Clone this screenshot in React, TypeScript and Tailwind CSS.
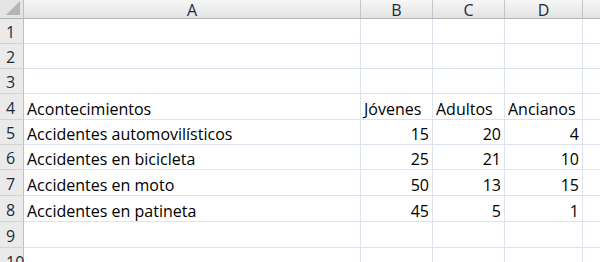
const COLS = ['A', 'B', 'C', 'D', ''];

const ROW_HEIGHTS = [25, 25, 25, 26, 25, 25, 26, 26, 26, 26];

type Cell = { text: string; align?: 'left' | 'right' };

const DATA: Record<number, Cell[]> = {
  4: [
    { text: 'Acontecimientos' },
    { text: 'Jóvenes' },
    { text: 'Adultos' },
    { text: 'Ancianos' },
  ],
  5: [
    { text: 'Accidentes automovilísticos' },
    { text: '15', align: 'right' },
    { text: '20', align: 'right' },
    { text: '4', align: 'right' },
  ],
  6: [
    { text: 'Accidentes en bicicleta' },
    { text: '25', align: 'right' },
    { text: '21', align: 'right' },
    { text: '10', align: 'right' },
  ],
  7: [
    { text: 'Accidentes en moto' },
    { text: '50', align: 'right' },
    { text: '13', align: 'right' },
    { text: '15', align: 'right' },
  ],
  8: [
    { text: 'Accidentes en patineta' },
    { text: '45', align: 'right' },
    { text: '5', align: 'right' },
    { text: '1', align: 'right' },
  ],
};

const gridCols = 'grid grid-cols-[24px_337px_72px_72px_78px_40px]';

export default function App() {
  return (
    <div
      className="w-[600px] h-[262px] overflow-hidden bg-white text-[#000] text-[16px]"
      style={{ fontFamily: '"Open Sans", "Liberation Sans", sans-serif' }}
    >
      {/* column headers */}
      <div className={`${gridCols} h-[19px]`}>
        <div className="relative border-r border-b bg-[#e4e4e4] border-r-[#c0c0c0] border-b-[#b4b4b4]">
          <div className="absolute right-[3px] bottom-[3px] w-0 h-0 border-l-[14px] border-l-transparent border-b-[14px] border-b-[#b5b5b5]" />
        </div>
        {COLS.map((c, i) => (
          <div
            key={i}
            className="flex items-center justify-center border-r border-b border-r-[#c6c6c6] border-b-[#b4b4b4] bg-gradient-to-b from-[#f7f7f7] to-[#e3e3e3] text-[#1e2b3c] leading-none pt-[1px]"
          >
            {c}
          </div>
        ))}
      </div>

      {ROW_HEIGHTS.map((h, r) => {
        const row = r + 1;
        const cells = DATA[row] || [];
        return (
          <div key={row} className={gridCols} style={{ height: h }}>
            <div className="flex items-end justify-start pl-[6px] pb-[1px] border-r border-b border-r-[#c0c0c0] border-b-[#d3d3d3] bg-[#eaeaea] text-[#1e2b3c] leading-none text-[16px]">
              <span className="mb-[2px]">{row}</span>
            </div>
            {COLS.map((_, ci) => {
              const cell = cells[ci];
              return (
                <div
                  key={ci}
                  className={`flex items-end px-[3px] pb-[2px] border-r border-b border-[#dde3ee] whitespace-nowrap leading-none ${
                    cell?.align === 'right' ? 'justify-end' : 'justify-start'
                  }`}
                >
                  {cell?.text}
                </div>
              );
            })}
          </div>
        );
      })}
    </div>
  );
}
